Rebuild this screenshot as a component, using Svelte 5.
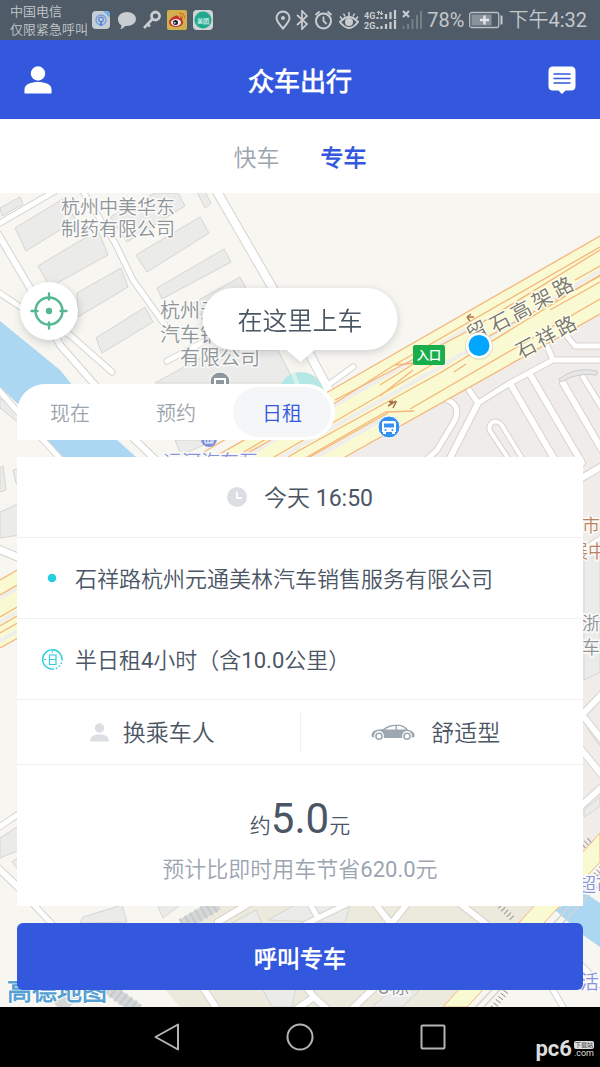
<script lang="ts">
  const services = ["快车", "专车"];
  const modes = ["现在", "预约", "日租"];

  let service = $state("专车");
  let mode = $state("日租");

  // Map geometry, in the coordinates of the map's viewBox
  const buildings = [
    "15,228 63,199 76,220 26,251",
    "38,266 98,230 108,255 50,287",
    "77,293 121,268 128,287 78,317",
    "96,338 145,307 153,322 102,353",
    "136,255 200,217 209,233 147,272",
    "157,288 224,249 231,262 162,299",
    "190,305 240,277 247,290 200,315",
    "0,208 20,197 23,204 2,216",
    "110,217 155,193 178,193 185,206 127,242",
    "196,190 204,190 211,203 205,208",
    "155,383 215,350 278,350 295,383",
    "175,440 200,440 204,445 181,455",
    "0,468 3,466 6,490 0,492",
    "13,470 20,468 20,488 16,483",
    "0,512 20,503 20,535 0,538",
    "0,838 20,825 20,850 0,858",
    "12,862 20,856 20,872",
    "0,398 20,413 20,424 0,408",
    "80,923 83,917 122,905 127,922",
    "157,905 180,905 163,918",
    "232,923 256,910 262,923",
    "268,920 295,905 350,905 345,923",
    "262,988 296,988 292,1007 272,1007",
    "372,1007 392,990 420,990 402,1007",
    "584,560 600,556 600,672 584,680",
    "588,724 600,738 600,746 588,730",
    "584,810 600,797 600,806 584,817",
  ];

  const roads = [
    { d: "M216 190L272 287L310 355L331 394", w: 8 },
    { d: "M82 190L115 243L133 280L165 325", w: 5 },
    { d: "M0 223L57 190", w: 5 },
    { d: "M-2 234L33 293L60 345L95 385", w: 6 },
    { d: "M-2 292L25 310L70 335L112 372", w: 5 },
    { d: "M167 361L205 341", w: 5 },
    { d: "M328 385L353 367", w: 5 },
    { d: "M-2 389L17 411L64 463", w: 5 },
    { d: "M133 438L158 462", w: 6 },
    { d: "M467 387L478 403L510 383L553 360H602", w: 5 },
    { d: "M478 403L448 462", w: 6 },
    { d: "M545 341L553 360", w: 5 },
    { d: "M567 336L575 346H602", w: 5 },
    { d: "M447 400C456 403 459 409 455 420L437 450L424 462", w: 5 },
    { d: "M511 385L556 462", w: 6 },
    { d: "M531 376L582 463", w: 6 },
    { d: "M563 383L602 450", w: 6 },
    { d: "M583 377L602 408", w: 5 },
    { d: "M508 458L490 431C487 421 498 418 503 427L523 460", w: 4 },
    { d: "M580 479L602 466", w: 6 },
    { d: "M580 552L602 537", w: 4 },
    { d: "M-2 549L20 558", w: 7 },
    { d: "M-2 828L20 813", w: 5 },
    { d: "M-2 868L20 889", w: 6 },
    { d: "M33 904L52 924", w: 5 },
    { d: "M204 989L217 1009", w: 6 },
    { d: "M218 922L250 903", w: 6 },
    { d: "M310 904L318 918L345 905M318 918L302 926", w: 5 },
    { d: "M374 902L391 924L407 904", w: 6 },
    { d: "M458 902L486 924", w: 6 },
    { d: "M298 1008L314 997L326 1008M314 997L307 988", w: 6 },
    { d: "M353 1008L374 988", w: 6 },
    { d: "M580 717L602 694", w: 6 },
    { d: "M580 712L602 740", w: 6 },
    { d: "M580 748L602 775", w: 6 },
    { d: "M580 807L602 787", w: 6 },
    { d: "M582 966L602 986", w: 5 },
    { d: "M552 988L564 1009", w: 5 },
  ];

  const laneLines = [
    "M0 580L333 389L600 236",
    "M0 595L335 403L396 364L600 247",
    "M335 400L470 330L600 250",
    "M0 617L300 442L440 360M575 280L600 266",
    "M0 626L300 450L440 373L600 275",
    "M0 633L386 412L414 411",
    "M0 648L345 457L600 314",
    "M380 385L415 363L395 365M380 396L413 370",
    "M480 341L600 276",
    "M550 310L600 282",
    "M410 409L600 299",
    "M454 372L466 364",
    "M310 457L388 413",
    "M185 463L250 425M230 460L330 402",
  ];

  const streetNames = [
    { ch: "留", x: 477, y: 331 },
    { ch: "石", x: 500, y: 322 },
    { ch: "高", x: 521, y: 311 },
    { ch: "架", x: 542, y: 299 },
    { ch: "路", x: 563, y: 287 },
    { ch: "石", x: 526, y: 348 },
    { ch: "祥", x: 546, y: 337 },
    { ch: "路", x: 566, y: 326 },
  ];
</script>

<div class="screen">
  <div class="status">
    <div class="carrier">
      <span>中国电信</span>
      <span>仅限紧急呼叫</span>
    </div>
    <div class="notices">
      <svg width="19" height="20" viewBox="0 0 19 20">
        <rect y="1" width="18" height="18" rx="4" fill="#c9ced4" />
        <path d="M11 1h4q3 0 3 4v3z" fill="#6fb2e8" />
        <circle cx="9" cy="10" r="5" fill="none" stroke="#6f9fe0" stroke-width="1.4" />
        <circle cx="9" cy="9.500" r="2.300" fill="none" stroke="#5488d8" stroke-width="1.200" />
        <path d="M8 11h2v5H8z" fill="#5488d8" />
      </svg>
      <svg width="20" height="20" viewBox="0 0 20 20">
        <path d="M10 2c5 0 9 3 9 7s-4 7-9 7l-2 0c-1 2-3 3-5 3 1-1 2-2 1-4-2-1-3-4-3-6 0-4 4-7 9-7z" fill="#c9cdd1" />
      </svg>
      <svg width="18" height="20" viewBox="0 0 18 20">
        <circle cx="12.500" cy="6" r="4" fill="none" stroke="#c9cdd1" stroke-width="2.800" />
        <path d="M9.500 9L1 18M4.500 14l2.500 2.500" fill="none" stroke="#c9cdd1" stroke-width="2.600" />
      </svg>
      <svg width="20" height="20" viewBox="0 0 20 20">
        <rect width="20" height="20" rx="2" fill="#d3b04f" />
        <path d="M8 6c3-1 4 0 4 2 3-1 4 0 3 2 2 1 2 6-5 7-5 0-8-2-8-5 0-2 3-5 6-6z" fill="#c3342f" />
        <ellipse cx="9" cy="12.500" rx="5" ry="3.600" fill="#eee" />
        <circle cx="8.500" cy="12.500" r="2.500" fill="#222" />
        <circle cx="7.800" cy="12.800" r=".9" fill="#eee" />
        <path d="M12 3.500q5-1 6 5M13 6q2 0 2.500 2.500" fill="none" stroke="#d9722a" stroke-width="1.300" />
      </svg>
      <svg width="20" height="20" viewBox="0 0 20 20">
        <rect width="20" height="20" rx="4" fill="#cfd3d5" />
        <circle cx="10" cy="10" r="8.500" fill="#22a88f" />
        <text class="tiny" x="10" y="13" text-anchor="middle">美团</text>
      </svg>
    </div>
    <div class="system">
      <svg width="16" height="20" viewBox="0 0 16 20">
        <path d="M8 18.500C4 14 1.500 11 1.500 8a6.500 6.500 0 0 1 13 0c0 3-2.500 6-6.500 10.500z" fill="none" stroke="#c9cdd1" stroke-width="2" />
        <circle cx="8" cy="8" r="2" fill="#c9cdd1" />
      </svg>
      <svg width="13" height="20" viewBox="0 0 13 20">
        <path d="M1 5l10 9-5 5V1l5 5-10 9" fill="none" stroke="#c9cdd1" stroke-width="1.700" />
      </svg>
      <svg width="20" height="20" viewBox="0 0 20 20">
        <circle cx="9.500" cy="11" r="7.500" fill="none" stroke="#c9cdd1" stroke-width="2" />
        <path d="M9.500 6.500V11l3 3M1.500 5l4-3.500M17.500 5l-4-3.500" fill="none" stroke="#c9cdd1" stroke-width="1.800" />
      </svg>
      <svg width="20" height="20" viewBox="0 0 20 20">
        <path d="M1 12q9-10 18 0q-9 12-18 0z" fill="none" stroke="#c9cdd1" stroke-width="2" />
        <circle cx="10" cy="12" r="4" fill="#c9cdd1" />
        <path d="M10 2v4M4.500 3.500l1.500 3M15.500 3.500l-1.500 3M1 6.500l2 2.500M19 6.500l-2 2.500" stroke="#c9cdd1" stroke-width="1.500" />
      </svg>
      <svg class="cell" width="33" height="20" viewBox="0 0 33 20">
        <text x="0" y="9">4G</text>
        <text x="0" y="19">2G</text>
        <path d="M14.500 1v4M17.500 1v4M13 3l1.500-2 1.500 2M16 3l1.500 2 1.500-2" fill="none" stroke="#c9cdd1" />
        <path d="M13.500 9V7M17.500 9V7M22 9V4M26.500 9V2M31 9V0M13.500 19v-2M17.500 19v-3M22 19v-5M26.500 19v-7M31 19v-9" stroke="#c9cdd1" stroke-width="2.200" />
      </svg>
      <svg width="20" height="20" viewBox="0 0 20 20">
        <path d="M1 1l6 6M7 1l-6 6" stroke="#c9cdd1" stroke-width="2" />
        <path d="M1.500 19v-3M6 19v-5M10.500 19V9M15 19V5M19 19V1" stroke="#75808a" stroke-width="2" />
      </svg>
      <span>78%</span>
      <svg width="34" height="20" viewBox="0 0 34 20">
        <rect x=".7" y="2.500" width="29" height="15" rx="2" fill="none" stroke="#b9bec3" stroke-width="1.300" />
        <rect x="2.500" y="4.500" width="20" height="11" fill="#89929a" />
        <path d="M15.500 5.500v9M11 10h9" stroke="#e4e6e8" stroke-width="2.400" />
        <path d="M32.500 5.500v9" stroke="#c9cdd1" stroke-width="2" />
      </svg>
      <span>下午4:32</span>
    </div>
  </div>

  <header>
    <button class="icon-btn" aria-label="个人中心">
      <svg width="28" height="28" viewBox="0 0 28 28" fill="#fff">
        <circle cx="14" cy="7.500" r="7.200" />
        <path d="M.5 27.500v-4C.5 18 7 16 14 16s13.500 2 13.500 7.500v4z" />
      </svg>
    </button>
    <h1>众车出行</h1>
    <button class="icon-btn" aria-label="消息">
      <svg width="28" height="28" viewBox="0 0 28 28">
        <path d="M5 .5h18q4.500 0 4.500 4.500v15q0 4.500-4.500 4.500h-5.500L14 28l-3.500-3.500H5Q.5 24.500.5 20V5Q.5.5 5 .5z" fill="#fff" />
        <path d="M5.500 8h17M5.500 12.500h17M5.500 17h17" stroke="#3358dd" stroke-width="1.600" />
      </svg>
    </button>
  </header>

  <nav class="services">
    {#each services as name}
      <button class:active={service === name} onclick={() => (service = name)}>{name}</button>
    {/each}
  </nav>

  <main>
    <svg class="map" viewBox="0 193 600 814" preserveAspectRatio="xMidYMin slice">
      <rect y="193" width="600" height="814" fill="#f8f6f1" />
      <path d="M345 457L600 314V850L440 1007H345z" fill="#f0ecea" />
      <path d="M180 1007h265L540 906H215L140 960z" fill="#eceadd" />
      <path d="M460 1007L550 906H600V1007z" fill="#f8f6f1" />
      <path d="M0 321L60 370L117 440L145 465H70L45 440L17 403L0 387z" fill="#abd7f3" />
      <path d="M555 910L585 893L600 903V947L583 935z" fill="#abd7f3" />
      <path d="M182 925L218 904M108 988L138 1010M58 1008L75 995" stroke="#d3d7d8" stroke-width="12" fill="none" />
      <path d="M182 925L218 904M108 988L138 1010" stroke="#b7bcbd" stroke-width="14" stroke-dasharray="2 4" fill="none" opacity=".5" />

      {#each buildings as points}
        <polygon {points} fill="#ebebea" stroke="#d6d5d2" />
      {/each}

      <g fill="none" stroke-linecap="round" stroke-linejoin="round">
        {#each roads as road}
          <path d={road.d} stroke="#d6d4ce" stroke-width={road.w + 2} />
        {/each}
        {#each roads as road}
          <path d={road.d} stroke="#fff" stroke-width={road.w} />
        {/each}
      </g>
      <path d="M559 379Q575 366 597 371V375Q577 372 561 382z" fill="#e6e6e6" stroke="#ccc" />

      <!-- elevated road -->
      <path d="M0 580L333 389L600 236V314L345 457L0 648z" fill="#fafad2" />
      <path d="M0 598L335 405L400 368L470 327M0 622L300 446L440 367L600 271M0 641L320 455L385 418" fill="none" stroke="#f0eeec" stroke-width="4" />
      {#each laneLines as d}
        <path {d} fill="none" stroke="#f5b57c" stroke-width="1.300" />
      {/each}
      <path d="M467 317h7M467 317l4-3M467 317l3 4M388 406l8-5M390 403l6-1-3 6M389 402l4-1" fill="none" stroke="#a9744c" stroke-width="1.500" />

      <path d="M443 1007L600 833V862L467 1007z" fill="#fafad2" stroke="#f5b57c" />
      <path d="M474 1009L605 868M482 1009L605 878" fill="none" stroke="#d5d3ce" stroke-width="1.500" />
      <path d="M493 1008L507 990M500 906L513 919M583 846L592 838M593 878L602 868" fill="none" stroke="#999" stroke-width="6" stroke-dasharray="1 3" />

      <g class="place" font-size="19">
        <text x="61" y="214">杭州中美华东</text>
        <text x="61" y="236">制药有限公司</text>
      </g>
      <g class="place" font-size="20">
        <text x="160" y="318">杭州元通</text>
        <text x="160" y="342">汽车销售</text>
        <text x="180" y="365">有限公司</text>
        <text x="378" y="994">8栋</text>
      </g>
      <g class="place" font-size="18">
        <text x="582" y="630">浙</text>
        <text x="582" y="654">车</text>
      </g>
      <g class="place brown" font-size="18">
        <text x="582" y="532">市</text>
        <text x="570" y="558">展中</text>
      </g>
      <g class="place violet" font-size="19">
        <text x="163" y="469">运河汽车互</text>
        <text x="577" y="892">超市</text>
        <text x="580" y="989">活</text>
      </g>
      {#each streetNames as s}
        <text class="street" text-anchor="middle" transform="translate({s.x} {s.y}) rotate(-28)" y="7">{s.ch}</text>
      {/each}
      <text class="map-brand" x="7" y="1000">高德地图</text>

      <circle cx="220" cy="382" r="10" fill="#8e979d" stroke="#fff" />
      <path d="M215 384v-5h10v5" fill="none" stroke="#fff" stroke-width="2" />
      <circle cx="209" cy="439" r="8" fill="#7d90dc" />
      <path d="M205 438v5h8v-5M208 443v-4M211 443v-4" fill="none" stroke="#fff" />

      <circle cx="301" cy="395" r="23" fill="#b5e8e4" />
      <path d="M293 373L303 400" stroke="#d8f2ef" stroke-width="4" />

      <rect x="413" y="345" width="32" height="20" rx="2" fill="#18ae4b" />
      <text class="entry" x="429" y="360" text-anchor="middle">入口</text>

      <circle cx="389" cy="427" r="11" fill="#3591f0" stroke="#fff" />
      <path d="M384 421h10q2 0 2 2v9H382v-9q0-2 2-2zM383 432h3v2h-3zM392 432h3v2h-3z" fill="#fff" />
      <path d="M384 423.500h10v4H384z" fill="#3591f0" />
      <circle cx="385.500" cy="430" r="1" fill="#3591f0" />
      <circle cx="392.500" cy="430" r="1" fill="#3591f0" />

      <circle cx="479" cy="346" r="14" fill="#c9c9b8" opacity=".5" />
      <circle cx="479" cy="345.500" r="13" fill="#fff" />
      <circle cx="479" cy="345.500" r="10.500" fill="#03a6ff" />
    </svg>

    <button class="locate" aria-label="定位">
      <svg width="38" height="38" viewBox="0 0 38 38">
        <g fill="none" stroke="#54b890" stroke-width="2.400" stroke-linecap="round">
          <circle cx="19" cy="19" r="13.500" />
          <path d="M19 1.500v6M19 30.500v6M1.500 19h6M30.500 19h6" />
        </g>
        <circle cx="19" cy="19" r="3.200" fill="#54b890" />
      </svg>
    </button>

    <div class="bubble">在这里上车</div>

    <div class="modes">
      {#each modes as name}
        <button class:active={mode === name} onclick={() => (mode = name)}>{name}</button>
      {/each}
    </div>

    <section class="card">
      <button class="row time">
        <svg width="20" height="20" viewBox="0 0 20 20">
          <circle cx="10" cy="10" r="10" fill="#dbdfe3" />
          <path d="M10 4.500V11h5" fill="none" stroke="#fff" stroke-width="1.800" />
        </svg>
        <span>今天 16:50</span>
      </button>
      <button class="row">
        <svg width="21" height="21" viewBox="0 0 21 21">
          <circle cx="10" cy="10" r="4.300" fill="#25cfdf" />
        </svg>
        <span>石祥路杭州元通美林汽车销售服务有限公司</span>
      </button>
      <button class="row">
        <svg width="21" height="21" viewBox="0 0 21 21" fill="none" stroke="#2fcfdc">
          <path d="M20 11.500A9.700 9.700 0 1 0 10.500 20.200" stroke-width="1.500" />
          <path d="M10.500 20.200A9.700 9.700 0 0 0 20 11.500" stroke-width="1.500" stroke-dasharray="1.500 2" />
          <path d="M7.500 6h6.500v9.500H7.500zM7.500 10.500h6.500M10.500 1.500v2M2 10.500h2" stroke-width="1.200" />
        </svg>
        <span>半日租4小时（含10.0公里）</span>
      </button>
      <div class="options">
        <button>
          <svg width="19" height="19" viewBox="0 0 19 19" fill="#dbdfe3">
            <circle cx="9.500" cy="5" r="4.700" />
            <path d="M.3 18.500V17c0-3.500 4-5.500 9.200-5.500s9.200 2 9.200 5.500v1.500z" />
          </svg>
          <span>换乘车人</span>
        </button>
        <button>
          <svg width="44" height="17" viewBox="0 0 44 17">
            <path d="M.5 12.500C.5 8 2.500 6 8 5.500L12 5Q18 .8 24 .8h4q5 0 9 5 6 1.500 6.500 4.500v2.700L40 14H4z" fill="#9ca7b2" />
            <path d="M14 5.500Q19 2 24.500 2v3.500zM26 2h3q3 .5 6 3.500h-9z" fill="#fff" />
            <circle cx="8" cy="12" r="4.900" fill="#fff" />
            <circle cx="36" cy="12" r="4.900" fill="#fff" />
            <circle cx="8" cy="12.300" r="3" fill="none" stroke="#9ca7b2" stroke-width="1.600" />
            <circle cx="36" cy="12.300" r="3" fill="none" stroke="#9ca7b2" stroke-width="1.600" />
          </svg>
          <span>舒适型</span>
        </button>
      </div>
      <div class="price">
        <p class="amount">约<strong>5.0</strong>元</p>
        <p class="saving">预计比即时用车节省620.0元</p>
      </div>
    </section>

    <button class="call">呼叫专车</button>
  </main>

  <footer>
    <button aria-label="返回">
      <svg width="28" height="28" viewBox="0 0 28 28">
        <path d="M25 1.500v25L2.500 14z" />
      </svg>
    </button>
    <button aria-label="主页">
      <svg width="28" height="28" viewBox="0 0 28 28">
        <circle cx="14" cy="14" r="12.500" />
      </svg>
    </button>
    <button aria-label="最近任务">
      <svg width="28" height="28" viewBox="0 0 28 28">
        <rect x="2.500" y="2.500" width="23" height="23" rx="1" />
      </svg>
    </button>
    <div class="site">
      <b>pc6</b>
      <div>
        <i>下载站</i>
        <span>.com</span>
      </div>
    </div>
  </footer>
</div>

<style>
  :global(body) {
    margin: 0;
  }
  .screen {
    display: flex;
    flex-direction: column;
    min-height: 100vh;
    font-family: Roboto, "Noto Sans CJK SC DemiLight", "Noto Sans CJK SC", sans-serif;
    color: #4b5665;
  }
  button {
    padding: 0;
    border: 0;
    background: none;
    font: inherit;
    color: inherit;
    cursor: pointer;
  }
  svg {
    flex: none;
    display: block;
  }

  .status {
    display: flex;
    align-items: center;
    height: 40px;
    padding: 0 13px 0 10px;
    background: #4f5b66;
    color: #c3c8cc;
  }
  .carrier {
    display: flex;
    flex-direction: column;
    padding-top: 2px;
    font-size: 13px;
    line-height: 18px;
    white-space: nowrap;
  }
  .notices {
    display: flex;
    gap: 6px;
    margin-left: 4px;
  }
  .tiny {
    font-size: 6px;
    font-weight: 700;
    fill: #d6efe9;
  }
  .system {
    display: flex;
    align-items: center;
    gap: 5px;
    margin-left: auto;
    font-size: 20px;
    line-height: 24px;
    white-space: nowrap;
  }
  .cell text {
    font-size: 9px;
    font-weight: 700;
    fill: #c9cdd1;
  }

  header {
    display: flex;
    align-items: center;
    justify-content: space-between;
    height: 79px;
    padding: 0 24px;
    background: #3358dd;
    color: #fff;
  }
  h1 {
    margin: 0;
    padding-top: 4px;
    font-size: 26px;
    font-weight: 700;
    line-height: 40px;
  }

  .services {
    display: flex;
    align-items: center;
    justify-content: center;
    gap: 41px;
    height: 74px;
    background: #fff;
    font-size: 23px;
    color: #9ba5ae;
  }
  .services .active {
    font-weight: 700;
    color: #3358dd;
  }

  main {
    position: relative;
    flex: 1;
    display: flex;
    flex-direction: column;
    justify-content: flex-end;
    gap: 17px;
    padding: 191px 17px 17px;
    overflow: hidden;
  }
  .map {
    position: absolute;
    inset: 0;
    width: 100%;
    height: 100%;
  }
  .place {
    fill: #8d959b;
    stroke: #fbfaf7;
    stroke-width: 3px;
    paint-order: stroke;
  }
  .brown {
    fill: #b98362;
  }
  .violet {
    fill: #8793dd;
  }
  .street {
    font-size: 20px;
    fill: #77756e;
    stroke: #fdfdea;
    stroke-width: 3px;
    paint-order: stroke;
  }
  .map-brand {
    font-size: 25px;
    font-weight: 700;
    fill: #559fd2;
    stroke: #fff;
    stroke-width: 2px;
    paint-order: stroke;
  }
  .entry {
    font-size: 12px;
    font-weight: 700;
    fill: #fff;
  }

  .locate {
    position: absolute;
    left: 20px;
    top: 89px;
    display: grid;
    place-items: center;
    width: 58px;
    height: 58px;
    border-radius: 50%;
    background: #fff;
    box-shadow: 1px 3px 8px rgba(60, 70, 80, 0.25);
  }
  .bubble {
    position: absolute;
    left: 50%;
    top: 95px;
    padding: 6px 35px 0;
    border-radius: 31px;
    background: #fff;
    font-size: 25px;
    line-height: 56px;
    white-space: nowrap;
    transform: translateX(-50%);
    filter: drop-shadow(0 2px 4px rgba(60, 70, 80, 0.22));
  }
  .bubble::after {
    content: "";
    position: absolute;
    left: 50%;
    top: 100%;
    margin-left: -14px;
    border: 14px solid transparent;
    border-top: 12px solid #fff;
    border-bottom: 0;
  }

  .modes {
    position: relative;
    align-self: flex-start;
    display: flex;
    gap: 8px;
    padding: 3px 4px;
    border-radius: 28px 28px 28px 0;
    background: #fff;
    font-size: 20px;
    color: #9ba5ae;
  }
  .modes button {
    width: 98px;
    height: 50px;
    border-radius: 25px;
  }
  .modes .active {
    background: #f4f6f8;
    color: #3358dd;
  }

  .card {
    position: relative;
    background: #fff;
    font-size: 22px;
    line-height: 32px;
  }
  .row {
    display: flex;
    align-items: center;
    gap: 12px;
    box-sizing: border-box;
    width: 100%;
    min-height: 81px;
    padding: 0 25px;
    border-bottom: 1px solid #eff1f2;
    text-align: left;
  }
  .row span,
  .options span {
    padding-top: 4px;
  }
  .time {
    justify-content: center;
    gap: 17px;
    font-size: 23px;
  }
  .options {
    display: flex;
    align-items: center;
    height: 64px;
    border-bottom: 1px solid #eff1f2;
    font-size: 23px;
  }
  .options button {
    flex: 1;
    display: flex;
    align-items: center;
    justify-content: center;
    gap: 14px;
    height: 40px;
    padding-right: 12px;
  }
  .options button + button {
    gap: 16px;
    border-left: 1px solid #eff1f2;
  }
  .price {
    padding: 28px 16px 20px;
    text-align: center;
  }
  .price p {
    margin: 0;
  }
  .amount {
    font-size: 21px;
    line-height: 22px;
  }
  .amount strong {
    font-size: 42px;
    font-weight: 400;
    line-height: 52px;
  }
  .saving {
    padding-top: 9px;
    color: #9ba5b0;
  }

  .call {
    position: relative;
    min-height: 67px;
    border-radius: 6px;
    background: #3358dd;
    color: #fff;
    font-size: 23px;
    font-weight: 700;
  }

  footer {
    position: relative;
    display: flex;
    align-items: center;
    justify-content: center;
    gap: 105px;
    height: 60px;
    background: #000;
  }
  footer svg {
    fill: none;
    stroke: #b4b4b4;
    stroke-width: 2px;
    stroke-linejoin: round;
  }
  .site {
    position: absolute;
    right: 6px;
    bottom: 7px;
    display: flex;
    align-items: center;
    gap: 2px;
    color: #ddd;
  }
  .site b {
    font-size: 22px;
    line-height: 22px;
  }
  .site div {
    display: flex;
    flex-direction: column;
    font-size: 9px;
    line-height: 9px;
  }
  .site i {
    padding: 0 1px;
    border-radius: 2px;
    background: #ddd;
    color: #222;
    font-size: 6px;
    font-style: normal;
    line-height: 8px;
  }
</style>
